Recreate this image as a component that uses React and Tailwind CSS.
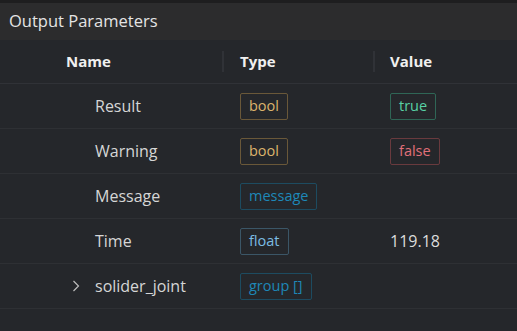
const rows = [
  { name: "Result", type: "bool", value: "true" },
  { name: "Warning", type: "bool", value: "false" },
  { name: "Message", type: "message" },
  { name: "Time", type: "float", value: "119.18" },
  { name: "solider_joint", type: "group []", expandable: true },
];

const typeStyles = {
  bool: "text-[#dcb36c] border-[#6a5839]",
  message: "text-[#1e88b8] border-[#1d4b60]",
  float: "text-[#7cbde3] border-[#3b5667]",
  "group []": "text-[#1e88b8] border-[#1d4b60]",
};

const valueStyles = {
  true: "text-[#58d1a4] border-[#2f6656]",
  false: "text-[#e0707a] border-[#693a3e]",
};

function Badge({ text, cls }) {
  return (
    <span className={`inline-flex items-center h-[27px] px-[8px] border rounded-[2px] text-[14.5px] leading-none ${cls}`}>
      {text}
    </span>
  );
}

function Chevron() {
  return (
    <svg width="8" height="12" viewBox="0 0 8 12" className="text-[#bdbdbd]">
      <path d="M1.5 1 L6.5 6 L1.5 11" fill="none" stroke="currentColor" strokeWidth="1.2" />
    </svg>
  );
}

export default function App() {
  return (
    <div
      className="w-[517px] h-[331px] bg-[#25272b] overflow-hidden text-[#d6d6d6]"
      style={{ fontFamily: '"Open Sans", "Noto Sans", sans-serif' }}
    >
      <div className="h-[3px] bg-[#1e1e1f]" />
      <div className="h-[37px] bg-[#2c2c2d] flex items-center pl-[9px] text-[16.5px] text-[#e4e4e4]">
        Output Parameters
      </div>
      <div className="grid grid-cols-[222px_151px_1fr] h-[44px] border-b border-[#303237] items-center text-[15px] font-bold text-[#f0f0f0]">
        <div className="pl-[66px]">Name</div>
        <div className="flex items-center h-full">
          <div className="w-[2px] h-[21px] bg-[#303237]" />
          <span className="pl-[16px]">Type</span>
        </div>
        <div className="flex items-center h-full">
          <div className="w-[2px] h-[21px] bg-[#303237]" />
          <span className="pl-[15px]">Value</span>
        </div>
      </div>
      {rows.map((r) => (
        <div
          key={r.name}
          className="grid grid-cols-[222px_151px_1fr] h-[45px] border-b border-[#2e3034] items-center text-[16px]"
        >
          <div className="flex items-center pl-[72px]">
            <div className="w-[23px]">{r.expandable && <Chevron />}</div>
            <span>{r.name}</span>
          </div>
          <div className="pl-[18px]">
            <Badge text={r.type} cls={typeStyles[r.type]} />
          </div>
          <div className="pl-[17px]">
            {r.value && valueStyles[r.value] ? (
              <Badge text={r.value} cls={valueStyles[r.value]} />
            ) : (
              <span className="text-[#dcdcdc]">{r.value}</span>
            )}
          </div>
        </div>
      ))}
    </div>
  );
}
